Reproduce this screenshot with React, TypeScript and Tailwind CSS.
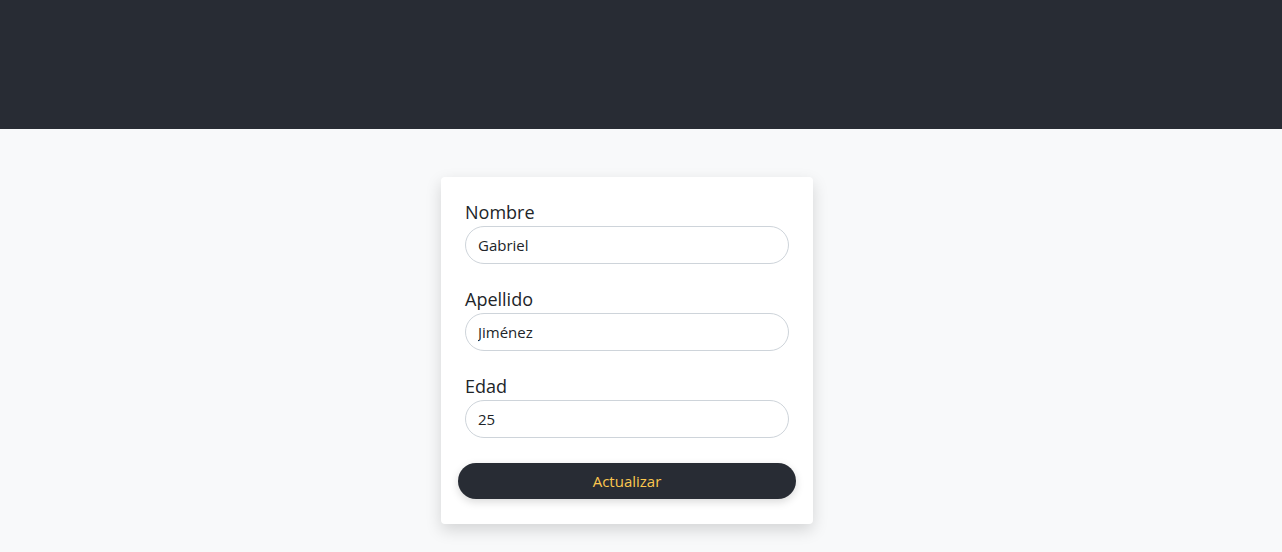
import { useState } from "react";

const fields = [
    { id: "nombre", label: "Nombre", value: "Gabriel" },
    { id: "apellido", label: "Apellido", value: "Jiménez" },
    { id: "edad", label: "Edad", value: "25" },
];

export default function App() {
    const [values, setValues] = useState<Record<string, string>>(
        Object.fromEntries(fields.map(f => [f.id, f.value]))
    );

    return (
        <div className="min-h-screen bg-[#f8f9fa] font-['Open_Sans','Noto_Sans',sans-serif] text-[#212529]">
            <header className="h-[129px] bg-[#282c34]"></header>
            <main className="flex justify-center pt-[48px] pr-[28px]">
                <form
                    className="w-[372px] bg-white rounded-[4px] shadow-[0_6px_16px_rgba(0,0,0,0.15)] px-[24px] pt-[22px] pb-[25px]"
                    onSubmit={e => e.preventDefault()}
                >
                    {fields.map(f => (
                        <div key={f.id} className="mb-[22px]">
                            <label htmlFor={f.id} className="block text-[18px] leading-[27px]">{f.label}</label>
                            <input
                                id={f.id}
                                value={values[f.id]}
                                onChange={e => setValues(prev => ({ ...prev, [f.id]: e.target.value }))}
                                className="w-full h-[38px] rounded-full border border-[#ced4da] px-[12px] text-[15px] text-[#212529] outline-none"
                            />
                        </div>
                    ))}
                    <button
                        type="submit"
                        className="block w-[338px] -mx-[7px] mt-[25px] h-[36px] rounded-full bg-[#282c34] text-[#fcc74f] text-[15px] shadow-[0_3px_8px_rgba(0,0,0,0.15)]"
                    >
                        Actualizar
                    </button>
                </form>
            </main>
        </div>
    );
}
